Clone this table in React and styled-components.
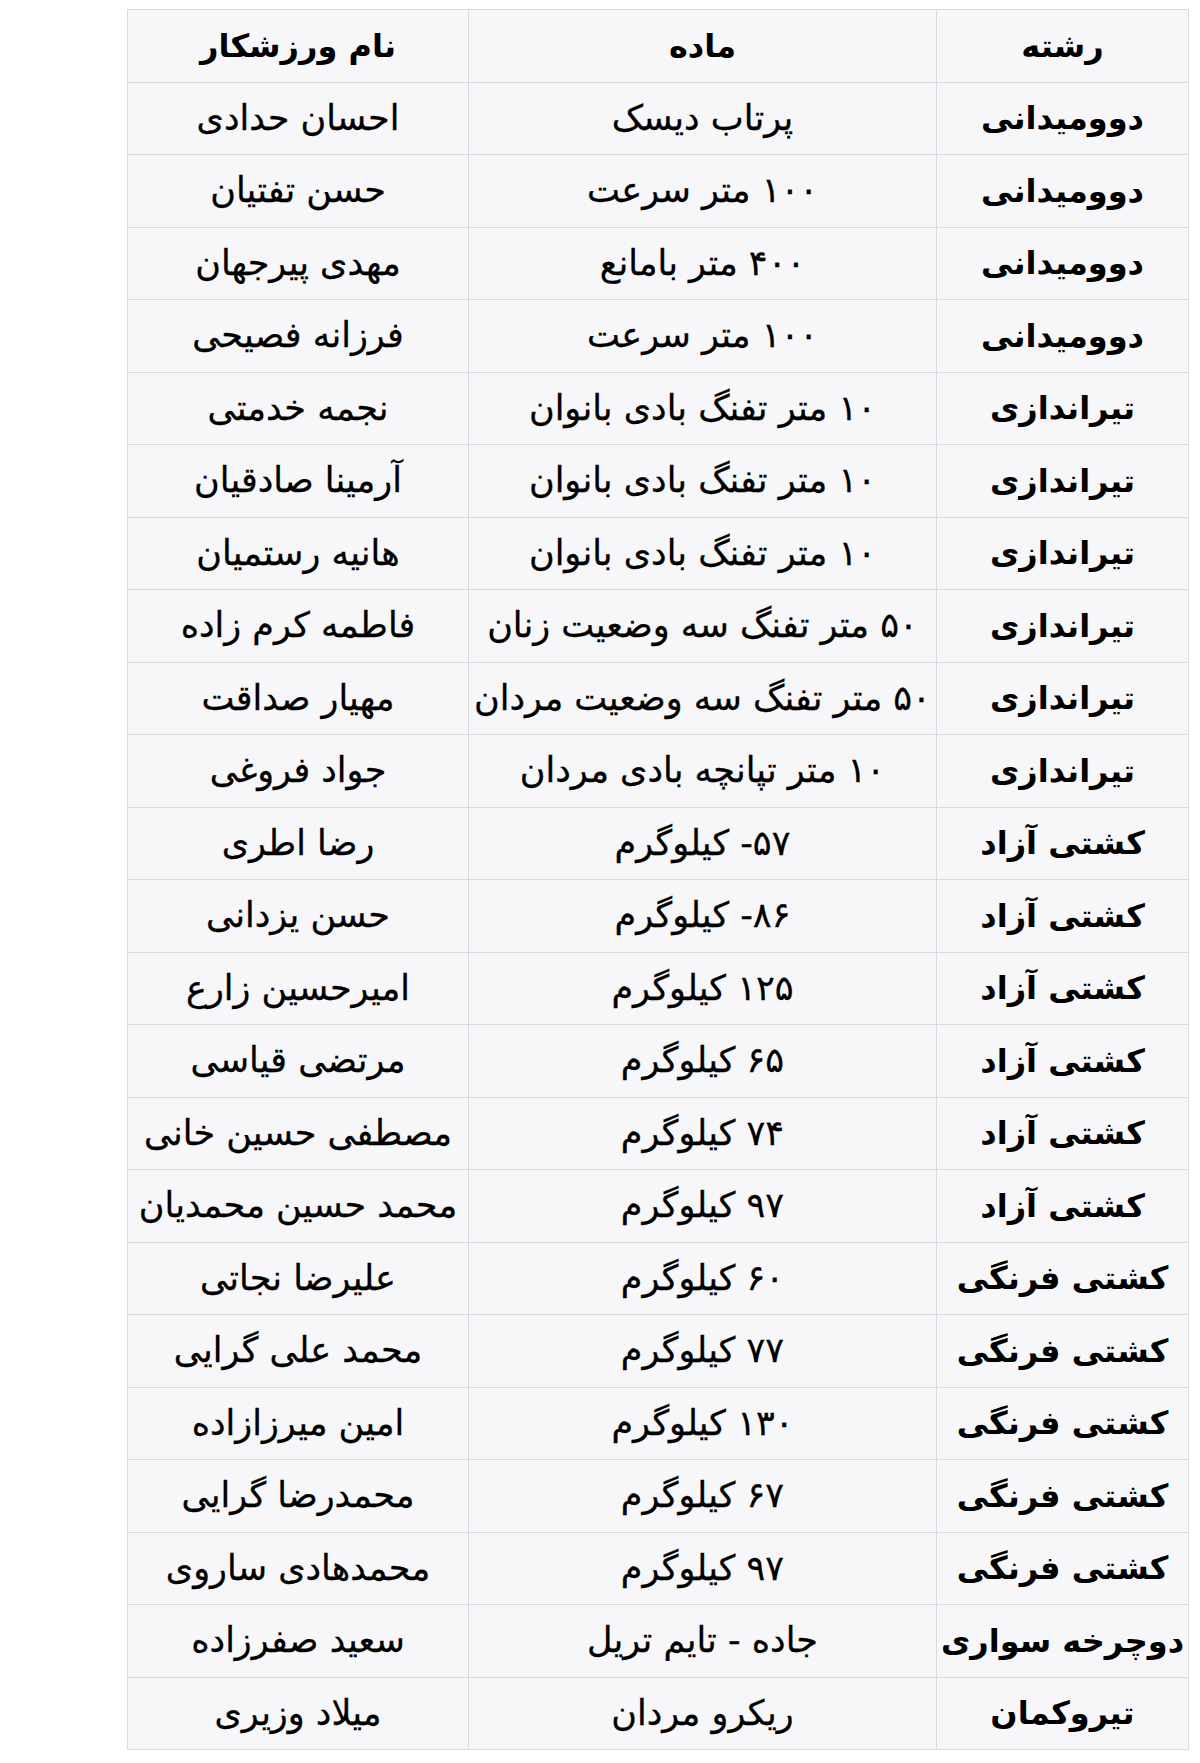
import React from 'react';
import styled, { createGlobalStyle } from 'styled-components';

const rows = [
  ['دوومیدانی', 'پرتاب دیسک', 'احسان حدادی'],
  ['دوومیدانی', '۱۰۰ متر سرعت', 'حسن تفتیان'],
  ['دوومیدانی', '۴۰۰ متر بامانع', 'مهدی پیرجهان'],
  ['دوومیدانی', '۱۰۰ متر سرعت', 'فرزانه فصیحی'],
  ['تیراندازی', '۱۰ متر تفنگ بادی بانوان', 'نجمه خدمتی'],
  ['تیراندازی', '۱۰ متر تفنگ بادی بانوان', 'آرمینا صادقیان'],
  ['تیراندازی', '۱۰ متر تفنگ بادی بانوان', 'هانیه رستمیان'],
  ['تیراندازی', '۵۰ متر تفنگ سه وضعیت زنان', 'فاطمه کرم زاده'],
  ['تیراندازی', '۵۰ متر تفنگ سه وضعیت مردان', 'مهیار صداقت'],
  ['تیراندازی', '۱۰ متر تپانچه بادی مردان', 'جواد فروغی'],
  ['کشتی آزاد', '۵۷- کیلوگرم', 'رضا اطری'],
  ['کشتی آزاد', '۸۶- کیلوگرم', 'حسن یزدانی'],
  ['کشتی آزاد', '۱۲۵ کیلوگرم', 'امیرحسین زارع'],
  ['کشتی آزاد', '۶۵ کیلوگرم', 'مرتضی قیاسی'],
  ['کشتی آزاد', '۷۴ کیلوگرم', 'مصطفی حسین خانی'],
  ['کشتی آزاد', '۹۷ کیلوگرم', 'محمد حسین محمدیان'],
  ['کشتی فرنگی', '۶۰ کیلوگرم', 'علیرضا نجاتی'],
  ['کشتی فرنگی', '۷۷ کیلوگرم', 'محمد علی گرایی'],
  ['کشتی فرنگی', '۱۳۰ کیلوگرم', 'امین میرزازاده'],
  ['کشتی فرنگی', '۶۷ کیلوگرم', 'محمدرضا گرایی'],
  ['کشتی فرنگی', '۹۷ کیلوگرم', 'محمدهادی ساروی'],
  ['دوچرخه سواری', 'جاده - تایم تریل', 'سعید صفرزاده'],
  ['تیروکمان', 'ریکرو مردان', 'میلاد وزیری'],
];

const GlobalStyle = createGlobalStyle`
  html, body {
    margin: 0;
    background: #fff;
  }
  body {
    font-family: "DejaVu Sans", "Noto Sans", sans-serif;
    color: #000;
  }
`;

const Page = styled.div`
  padding: 9px 0 13px 127px;
`;

const Table = styled.table`
  direction: rtl;
  width: 1061px;
  border-collapse: collapse;
  table-layout: fixed;
  background: #f7f7f9;
  border: 1.5px solid #d4d5d8;
`;

const Row = styled.tr`
  height: 72.5px;
`;

const Cell = styled.td`
  border: 1.5px solid #d9dadd;
  padding: 0;
  text-align: center;
  vertical-align: middle;
  font-size: ${(p) => (p.$bold ? '32px' : '35px')};
  font-weight: ${(p) => (p.$bold ? 700 : 400)};
  white-space: nowrap;
  overflow: visible;
  line-height: 1;
  -webkit-text-stroke: ${(p) => (p.$bold ? '0' : '0.3px')};
`;

const Head = styled(Cell).attrs({ as: 'th', $bold: true })`
  font-weight: 700;
`;

export default function App() {
  return (
    <Page>
      <GlobalStyle />
      <Table>
        <colgroup>
          <col style={{ width: 252 }} />
          <col style={{ width: 468 }} />
          <col style={{ width: 341 }} />
        </colgroup>
        <thead>
          <Row>
            <Head>رشته</Head>
            <Head>ماده</Head>
            <Head>نام ورزشکار</Head>
          </Row>
        </thead>
        <tbody>
          {rows.map((r, i) => (
            <Row key={i}>
              <Cell $bold>{r[0]}</Cell>
              <Cell>{r[1]}</Cell>
              <Cell>{r[2]}</Cell>
            </Row>
          ))}
        </tbody>
      </Table>
    </Page>
  );
}
